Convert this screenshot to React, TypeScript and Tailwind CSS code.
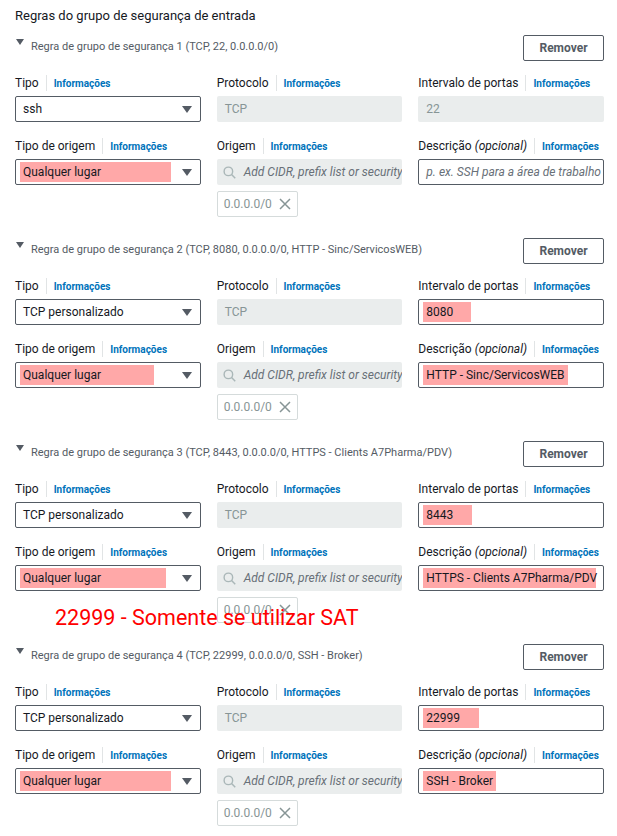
import React from "react";

type Rule = {
  n: number;
  summary: string;
  tipo: string;
  port: string;
  portHl?: string; // highlight width class
  desc?: string;
  descHl?: string;
  origemHl: string;
};

const rules: Rule[] = [
  { n: 1, summary: "(TCP, 22, 0.0.0.0/0)", tipo: "ssh", port: "22", origemHl: "min-w-[151px]" },
  {
    n: 2,
    summary: "(TCP, 8080, 0.0.0.0/0, HTTP - Sinc/ServicosWEB)",
    tipo: "TCP personalizado",
    port: "8080",
    portHl: "min-w-[48px]",
    desc: "HTTP - Sinc/ServicosWEB",
    descHl: "min-w-[136px]",
    origemHl: "min-w-[134px]",
  },
  {
    n: 3,
    summary: "(TCP, 8443, 0.0.0.0/0, HTTPS - Clients A7Pharma/PDV)",
    tipo: "TCP personalizado",
    port: "8443",
    portHl: "min-w-[49px]",
    desc: "HTTPS - Clients A7Pharma/PDV",
    descHl: "min-w-[166px]",
    origemHl: "min-w-[146px]",
  },
  {
    n: 4,
    summary: "(TCP, 22999, 0.0.0.0/0, SSH - Broker)",
    tipo: "TCP personalizado",
    port: "22999",
    portHl: "min-w-[56px]",
    desc: "SSH - Broker",
    descHl: "min-w-[73px]",
    origemHl: "min-w-[151px]",
  },
];

const Label = ({ children }: { children: React.ReactNode }) => (
  <div className="flex items-center h-[14px] text-[12px] text-[#16191f] whitespace-nowrap">
    <span>{children}</span>
    <span className="mx-[7px] w-px h-[16px] bg-[#e1e4e5]" />
    <span className="text-[10px] font-bold text-[#0073bb]">Informações</span>
  </div>
);

const Hl = ({ w, children }: { w: string; children: React.ReactNode }) => (
  <span className={`inline-flex items-center h-[20px] -ml-[3px] pl-[3px] pr-[3px] bg-[#ffa8a8] ${w}`}>{children}</span>
);

const Caret = () => (
  <svg width="10" height="7" viewBox="0 0 10 7" className="shrink-0">
    <path d="M0 0h10L5 7z" fill="#545b64" />
  </svg>
);

const Select = ({ children }: { children: React.ReactNode }) => (
  <div className="h-[26px] border border-[#545b64] rounded-[2px] bg-white flex items-center justify-between pl-[7px] pr-[8px] text-[12px] text-[#16191f]">
    <span className="flex items-center">{children}</span>
    <Caret />
  </div>
);

const TextBox = ({ children }: { children: React.ReactNode }) => (
  <div className="h-[26px] border border-[#545b64] rounded-[2px] bg-white flex items-center px-[7px] text-[12px] text-[#16191f] overflow-hidden whitespace-nowrap">
    {children}
  </div>
);

const Disabled = ({ children }: { children: React.ReactNode }) => (
  <div className="h-[26px] rounded-[2px] bg-[#eaeded] flex items-center px-[8px] text-[12px] text-[#879596]">{children}</div>
);

const Origem = () => (
  <div>
    <div className="h-[26px] rounded-[2px] bg-[#eaeded] flex items-center pl-[6px] overflow-hidden whitespace-nowrap text-[12px] italic text-[#687078]">
      <svg width="13" height="13" viewBox="0 0 14 14" className="mr-[8px] shrink-0">
        <circle cx="5.8" cy="5.8" r="4.6" fill="none" stroke="#aab7b8" strokeWidth="1.5" />
        <path d="M9.2 9.2l4 4" stroke="#aab7b8" strokeWidth="1.6" />
      </svg>
      Add CIDR, prefix list or security group
    </div>
    <div className="mt-[6px] w-[81px] h-[26px] border border-[#d5dbdb] rounded-[2px] flex items-center pl-[6px] text-[12px] text-[#879596]">
      0.0.0.0/0
      <svg width="12" height="12" viewBox="0 0 12 12" className="ml-[7px]">
        <path d="M1 1l10 10M11 1L1 11" stroke="#879596" strokeWidth="1.5" />
      </svg>
    </div>
  </div>
);

const RuleBlock = ({ r }: { r: Rule }) => (
  <div className="mb-[21px]">
    <div className="flex justify-between items-start h-[26px]">
      <div className="flex items-start pt-[4px]">
        <svg width="8" height="6" viewBox="0 0 8 6" className="ml-[1px] mr-[7px]">
          <path d="M0 0h8L4 6z" fill="#545b64" />
        </svg>
        <span className="text-[11px] text-[#545b64] leading-[14px] mt-[1px]">
          Regra de grupo de segurança {r.n} {r.summary}
        </span>
      </div>
      <button className="w-[81px] h-[26px] border border-[#545b64] rounded-[2px] text-[12px] font-bold text-[#545b64] bg-white">
        Remover
      </button>
    </div>

    <div className="grid grid-cols-3 gap-x-[16px] mt-[15px]">
      <Label>Tipo</Label>
      <Label>Protocolo</Label>
      <Label>Intervalo de portas</Label>
    </div>
    <div className="grid grid-cols-3 gap-x-[16px] mt-[6px]">
      <Select>{r.tipo}</Select>
      <Disabled>TCP</Disabled>
      {r.portHl ? (
        <TextBox>
          <Hl w={r.portHl}>{r.port}</Hl>
        </TextBox>
      ) : (
        <Disabled>{r.port}</Disabled>
      )}
    </div>

    <div className="grid grid-cols-3 gap-x-[16px] mt-[17px]">
      <Label>Tipo de origem</Label>
      <Label>Origem</Label>
      <Label>
        Descrição <i>(opcional)</i>
      </Label>
    </div>
    <div className="grid grid-cols-3 gap-x-[16px] mt-[6px] items-start">
      <Select>
        <Hl w={r.origemHl}>Qualquer lugar</Hl>
      </Select>
      <Origem />
      {r.desc && r.descHl ? (
        <TextBox>
          <Hl w={r.descHl}>{r.desc}</Hl>
        </TextBox>
      ) : (
        <TextBox>
          <span className="italic text-[#687078]">p. ex. SSH para a área de trabalho do administrador</span>
        </TextBox>
      )}
    </div>
  </div>
);

export default function App() {
  return (
    <div className="relative w-[617px] h-[836px] bg-white overflow-hidden pl-[15px] pr-[13px] pt-[7px]" style={{ fontFamily: "Roboto, 'Liberation Sans', sans-serif" }}>
      <h2 className="text-[13px] text-[#16191f] leading-[18px] h-[18px]">Regras do grupo de segurança de entrada</h2>
      <div className="mt-[10px]">
        {rules.map((r) => (
          <RuleBlock key={r.n} r={r} />
        ))}
      </div>
      <div className="absolute left-[55px] top-[604px] text-[21.5px] leading-[28px] text-[#ff0000] whitespace-nowrap">
        22999 - Somente se utilizar SAT
      </div>
    </div>
  );
}
